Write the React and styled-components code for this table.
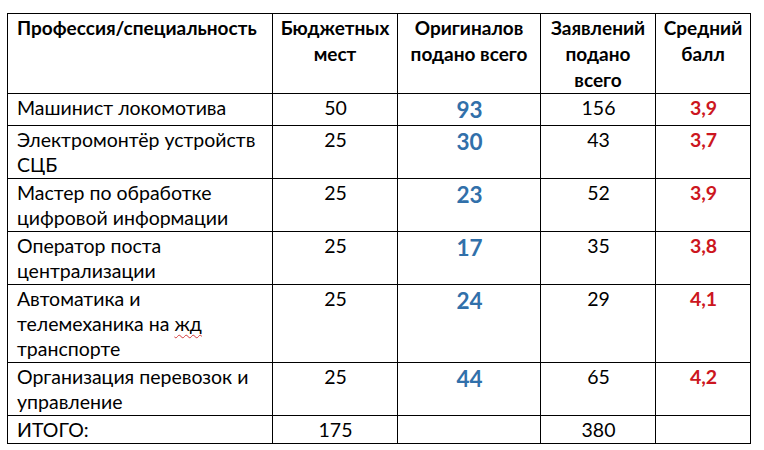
import React from 'react';
import styled, { createGlobalStyle } from 'styled-components';

const GlobalStyle = createGlobalStyle`
  body {
    margin: 0;
    background: #ffffff;
    font-family: 'Lato', 'Liberation Sans', sans-serif;
    color: #000000;
  }
`;

const Page = styled.div`
  padding: 13px 0 0 7px;
  width: 764px;
  height: 450px;
  box-sizing: border-box;
`;

const Table = styled.table`
  border-collapse: collapse;
  width: 743px;
  table-layout: fixed;
  font-size: 19.5px;
  line-height: 25px;
`;

const HeadCell = styled.th`
  border: 1.5px solid #000;
  vertical-align: top;
  padding: 1px 4px 0 ${(p) => (p.$left ? '9px' : '4px')};
  height: 77px;
  font-size: 19px;
  line-height: 26px;
  font-weight: 700;
  text-align: ${(p) => (p.$left ? 'left' : 'center')};
  box-sizing: border-box;
`;

const Cell = styled.td`
  border: 1.5px solid #000;
  vertical-align: top;
  padding: 1px 8px 1px 9px;
  text-align: ${(p) => (p.$left ? 'left' : 'center')};
`;

const Original = styled.div`
  color: #3170aa;
  font-weight: 700;
  font-size: 22.5px;
  line-height: 28px;
  padding-top: 1px;
`;

const Score = styled.span`
  color: #cc1620;
  font-weight: 700;
`;

const Squiggle = styled.span`
  text-decoration: underline wavy #d23a3a;
  text-decoration-thickness: 1px;
  text-underline-offset: 3px;
`;

const rows = [
  { name: 'Машинист локомотива', budget: 50, orig: 93, apps: 156, score: '3,9' },
  { name: 'Электромонтёр устройств СЦБ', budget: 25, orig: 30, apps: 43, score: '3,7' },
  { name: 'Мастер по обработке цифровой информации', budget: 25, orig: 23, apps: 52, score: '3,9' },
  { name: 'Оператор поста централизации', budget: 25, orig: 17, apps: 35, score: '3,8' },
  {
    name: (
      <>
        Автоматика и<br />
        телемеханика на <Squiggle>жд</Squiggle>
        <br />
        транспорте
      </>
    ),
    budget: 25,
    orig: 24,
    apps: 29,
    score: '4,1',
  },
  { name: 'Организация перевозок и управление', budget: 25, orig: 44, apps: 65, score: '4,2' },
];

export default function App() {
  return (
    <Page>
      <GlobalStyle />
      <Table>
        <colgroup>
          <col style={{ width: 265 }} />
          <col style={{ width: 125 }} />
          <col style={{ width: 143 }} />
          <col style={{ width: 115 }} />
          <col style={{ width: 95 }} />
        </colgroup>
        <thead>
          <tr>
            <HeadCell $left>Профессия/специальность</HeadCell>
            <HeadCell>Бюджетных мест</HeadCell>
            <HeadCell>Оригиналов подано всего</HeadCell>
            <HeadCell>Заявлений подано всего</HeadCell>
            <HeadCell>Средний балл</HeadCell>
          </tr>
        </thead>
        <tbody>
          {rows.map((r, i) => (
            <tr key={i}>
              <Cell $left>{r.name}</Cell>
              <Cell>{r.budget}</Cell>
              <Cell>
                <Original>{r.orig}</Original>
              </Cell>
              <Cell>{r.apps}</Cell>
              <Cell>
                <Score>{r.score}</Score>
              </Cell>
            </tr>
          ))}
          <tr>
            <Cell $left>ИТОГО:</Cell>
            <Cell>175</Cell>
            <Cell />
            <Cell>380</Cell>
            <Cell />
          </tr>
        </tbody>
      </Table>
    </Page>
  );
}
